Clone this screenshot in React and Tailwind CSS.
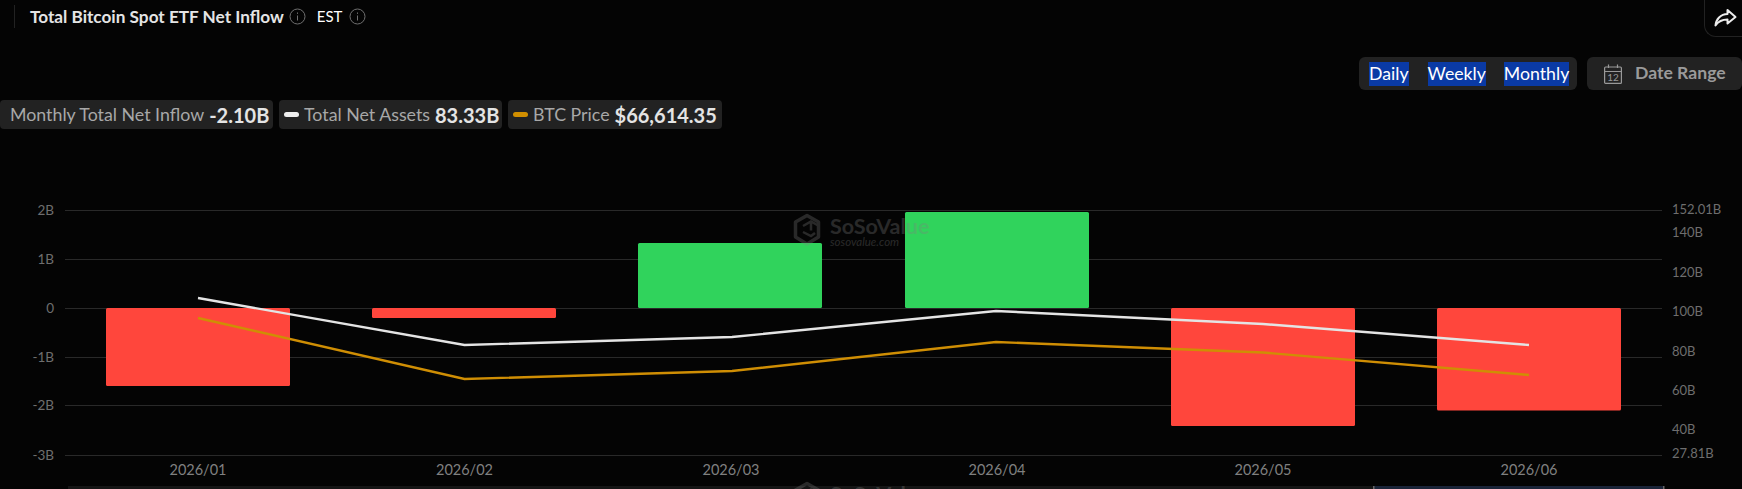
import React from 'react';

const font = { fontFamily: 'Lato, sans-serif' };

const leftTicks = [
  { label: '2B', y: 210 },
  { label: '1B', y: 259 },
  { label: '0', y: 308 },
  { label: '-1B', y: 357 },
  { label: '-2B', y: 405 },
  { label: '-3B', y: 455 },
];

const rightTicks = [
  { label: '152.01B', y: 209 },
  { label: '140B', y: 232 },
  { label: '120B', y: 272 },
  { label: '100B', y: 311 },
  { label: '80B', y: 351 },
  { label: '60B', y: 390 },
  { label: '40B', y: 429 },
  { label: '27.81B', y: 453 },
];

const bars = [
  { x: 106, y: 308, h: 78, fill: '#ff463c' },
  { x: 372, y: 308, h: 10, fill: '#ff463c' },
  { x: 638, y: 243, h: 65, fill: '#30d35c' },
  { x: 905, y: 212, h: 96, fill: '#30d35c' },
  { x: 1171, y: 308, h: 118, fill: '#ff463c' },
  { x: 1437, y: 308, h: 102.5, fill: '#ff463c' },
];

const months = ['2026/01', '2026/02', '2026/03', '2026/04', '2026/05', '2026/06'];
const centers = [198, 464.5, 731, 997, 1263, 1529];
const whiteLine = '198,298 464.5,345 732,337 996,311 1263,324 1529,345';
const orangeLine = '198,318 464.5,379 732,371 996,342 1263,352.500 1529,375';

const InfoIcon = () => (
  <svg width="17" height="17" viewBox="0 0 17 17" fill="none" stroke="#6f6f6f" strokeWidth="1">
    <circle cx="8.5" cy="8.5" r="7.5" />
    <path d="M8.5 7.5v5M8.5 4.5v1.4" />
  </svg>
);

const Pill = ({ color, label, value, className = '' }) => (
  <div className={`flex h-[29px] items-center rounded bg-[#222222] ${className}`}>
    {color && <span className={`mr-[5px] h-[5px] w-[15px] rounded-full ${color}`} />}
    <span className="text-[17.8px] text-[#a8a8a8]">{label}</span>
    <span className="ml-[5px] text-[20px] font-bold text-[#e4e4e4]">{value}</span>
  </div>
);

const Watermark = ({ y, sub }) => (
  <g transform={`translate(0 ${y})`} opacity="0.3">
    <path d="M806 217l11.500-6.500 11.500 6.500v15l-11.500 7-11.500-7z" transform="translate(-10.500 5)" fill="none" stroke="#808080" strokeWidth="3.500" strokeLinejoin="round" />
    <path d="M803 226l8-4.500 8 4.500M811 221.500v9M803 232l8 4 4-3" fill="none" stroke="#808080" strokeWidth="2.500" />
    <text x="830" y="234" fontSize="21.5" fontWeight="700" fill="#808080">SoSoValue</text>
    {sub && <text x="830" y="246" fontSize="11.500" fontStyle="italic" fill="#808080">sosovalue.com</text>}
  </g>
);

const App = () => (
  <div className="h-[489px] w-[1742px] overflow-hidden bg-[#040404]" style={font}>
    <header className="flex h-[33px] items-center pl-[14px]">
      <span className="mr-[15px] h-[23px] w-px bg-[#222222]" />
      <h1 className="text-[17.2px] font-bold text-[#e4e4e4]">Total Bitcoin Spot ETF Net Inflow</h1>
      <span className="ml-[5px]"><InfoIcon /></span>
      <span className="ml-[11px] text-[15px] text-white">EST</span>
      <span className="ml-[7px]"><InfoIcon /></span>
      <button className="ml-auto flex h-[37px] w-[38px] items-center justify-center self-start rounded-bl-xl border-b border-l border-[#222222] pl-[3px]">
        <svg width="23" height="20" viewBox="0 0 23 20" fill="none" stroke="#ececec" strokeWidth="2" strokeLinejoin="round">
          <path d="M13.500 2l8 7-8 6.500v-4c-5 0-9 1.500-12 6 .5-6 5-11.500 12-11.500z" />
        </svg>
      </button>
    </header>

    <div className="mt-[24px] flex justify-end gap-[10px]">
      <div className="flex h-[33px] w-[218px] items-center rounded-md bg-[#222222] pl-[10px] text-[17.7px] text-white">
        <span className="bg-[#0a3aa5] leading-[24px]">Daily</span>
        <span className="ml-[19px] bg-[#0a3aa5] leading-[24px]">Weekly</span>
        <span className="ml-[18px] bg-[#0a3aa5] leading-[24px]">Monthly</span>
      </div>
      <div className="flex h-[33px] w-[155px] items-center rounded-md bg-[#222222] pl-[17px]">
        <svg width="18" height="20" viewBox="0 0 18 20" fill="none" stroke="#999999" strokeWidth="1.2">
          <rect x="0.6" y="3" width="16.800" height="16.400" rx="1" />
          <path d="M.6 7.500h16.800M4.500 .5v3.500M13.500 .5v3.500" />
          <text x="9" y="17" fontSize="10" fill="#999999" stroke="none" textAnchor="middle">12</text>
        </svg>
        <span className="ml-[13px] text-[17.6px] font-bold text-[#9a9a9a]">Date Range</span>
      </div>
    </div>

    <div className="mt-[10px] flex gap-[6px]">
      <Pill label="Monthly Total Net Inflow" value="-2.10B" className="w-[273px] pl-[10px]" />
      <Pill color="bg-[#eeeeee]" label="Total Net Assets" value="83.33B" className="w-[223px] pl-[5px]" />
      <Pill color="bg-[#d18f00]" label="BTC Price" value="$66,614.35" className="w-[214px] pl-[5px]" />
    </div>

    <svg className="block" width="1742" height="360" viewBox="0 129 1742 360">
      {leftTicks.map((t) => (
        <g key={t.label}>
          <line x1="65" x2="1662" y1={t.y + 0.5} y2={t.y + 0.5} stroke="#292929" strokeWidth="1" />
          <text x="54" y={t.y + 5} textAnchor="end" fontSize="13.5" fill="#6e6e6e">{t.label}</text>
        </g>
      ))}
      {rightTicks.map((t) => (
        <text key={t.label} x="1672" y={t.y + 5} fontSize="13" fill="#6e6e6e">{t.label}</text>
      ))}
      {bars.map((b) => (
        <rect key={b.x} x={b.x} y={b.y} width="184" height={b.h} rx="1.5" fill={b.fill} />
      ))}
      <Watermark y={0} sub />
      <polyline points={whiteLine} fill="none" stroke="#e4e4e4" strokeWidth="2.4" />
      <polyline points={orangeLine} fill="none" stroke="#cf8e04" strokeWidth="2.4" />
      {months.map((m, i) => (
        <text key={m} x={centers[i]} y="475" textAnchor="middle" fontSize="14.500" fill="#808080">{m}</text>
      ))}
      <rect x="68" y="486" width="1596" height="3" fill="#151515" />
      <rect x="1374" y="486" width="290" height="3" fill="#1a2438" />
      <rect x="1373" y="486" width="1.500" height="3" fill="#666666" />
      <rect x="1663" y="486" width="1.500" height="3" fill="#666666" />
      <Watermark y={268} />
    </svg>
  </div>
);

export default App;
